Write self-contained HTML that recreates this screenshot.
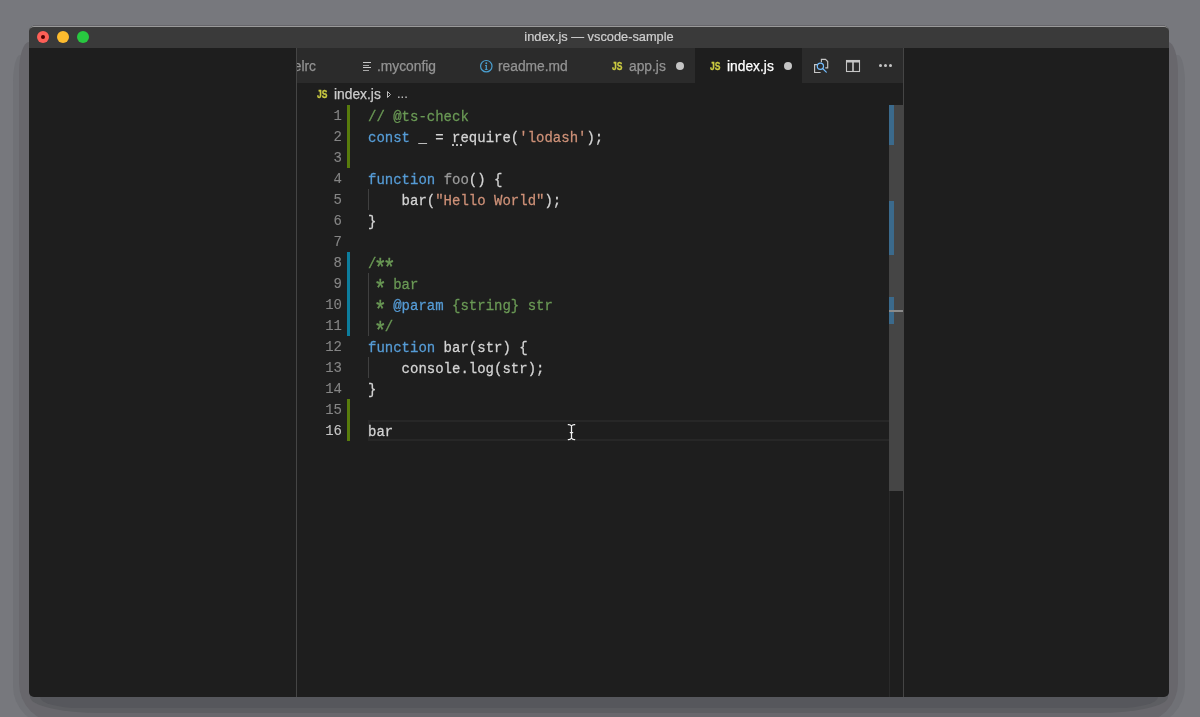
<!DOCTYPE html>
<html><head><meta charset="utf-8">
<style>
*{margin:0;padding:0;box-sizing:border-box}
html,body{width:1200px;height:717px;overflow:hidden;background:#77787d;font-family:"Liberation Sans",sans-serif}
.a{position:absolute}
#shadow1{left:13px;top:55px;width:1172px;height:671px;background:#707176;border-radius:7px 7px 40px 40px/28px 28px 40px 40px}
#shadow2{left:19px;top:42px;width:1159px;height:681px;background:#68676c;border-radius:10px 10px 40px 40px/30px 30px 40px 40px}
#shadow3{left:30px;top:600px;width:1138px;height:113px;background:#5d5e62;border-radius:0 0 70px 70px/0 0 16px 16px}
#shadow4{left:40px;top:600px;width:1118px;height:108px;background:#56575c;border-radius:0 0 40px 40px/0 0 11px 11px}
#win{left:29px;top:26px;width:1140px;height:671px;background:#1e1e1e;border-radius:5px;overflow:hidden}
#title{left:29px;top:26px;width:1140px;height:22px;background:#3a3a3a;border-top:1px solid #9a9a9a;border-radius:5px 5px 0 0}
#title .t{position:absolute;left:0;top:2px;width:1140px;text-align:center;color:#cfcfcf;font-size:12.8px;line-height:16px;-webkit-text-stroke:0.2px currentColor}
.light{position:absolute;top:5px;width:12px;height:12px;border-radius:50%}
.tab{position:absolute;top:49px;height:35px;color:#939393;font-size:13.8px;line-height:35px;white-space:nowrap;-webkit-text-stroke:0.25px currentColor}
.js{position:absolute;color:#cbcb41;font-size:11.5px;line-height:11px;font-weight:bold;font-family:"Liberation Sans",sans-serif;transform:scaleX(0.74);transform-origin:0 0;-webkit-text-stroke:0.3px currentColor}
.dot{position:absolute;width:8px;height:8px;border-radius:50%;background:#c5c5c5}
.code{font-family:"Liberation Mono",monospace;font-size:14px}
.ln{position:absolute;left:297px;width:45px;text-align:right;color:#858585;height:21px;line-height:21px;font-family:"Liberation Mono",monospace;font-size:14px;transform:translateY(1px) scaleY(1.07);-webkit-text-stroke:0.1px currentColor}
.cl{position:absolute;left:368px;height:21px;line-height:21px;color:#d4d4d4;white-space:pre;font-family:"Liberation Mono",monospace;font-size:14px;transform:translateY(1.5px) scaleY(1.07);-webkit-text-stroke:0.25px currentColor}
.ast{display:inline-block;transform:translateY(5.5px) scale(1.5,1.65)}
.k{color:#569cd6}.s{color:#ce9178}.c{color:#6a9955}.dim{color:#9a9a9a}
.gb{position:absolute;left:347px;width:3px}
.ig{position:absolute;width:1px;background:#404040}
</style></head><body><div id="root" style="position:absolute;left:0;top:0;width:1200px;height:717px;will-change:transform">
<div class="a" id="shadow1"></div>
<div class="a" id="shadow2"></div>
<div class="a" id="shadow3"></div>
<div class="a" id="shadow4"></div>
<div class="a" style="left:33px;top:25px;width:1132px;height:1px;background:#67666b"></div>
<div class="a" id="win"></div>
<div class="a" id="title">
  <div class="light" style="left:8px;top:4px;background:#fe5f57"><div style="position:absolute;left:4px;top:4px;width:4px;height:4px;border-radius:50%;background:#4d0000"></div></div>
  <div class="light" style="left:28px;top:4px;background:#febc2e"></div>
  <div class="light" style="left:48px;top:4px;background:#28c840"></div>
  <div class="t">index.js — vscode-sample</div>
</div>
<!-- separators -->
<div class="a" style="left:296px;top:48px;width:1px;height:649px;background:#454545"></div>
<div class="a" style="left:903px;top:48px;width:1px;height:649px;background:#454545"></div>
<!-- tab bar -->
<div class="a" style="left:297px;top:48px;width:606px;height:35px;background:#2b2b2b"></div>
<div class="a" style="left:695px;top:48px;width:107px;height:35px;background:#1e1e1e"></div>
<div class="tab" style="left:297px;width:19px;overflow:hidden"><span style="position:absolute;right:0">.babelrc</span></div>
<!-- myconfig icon -->
<div class="a" style="left:362.5px;top:62px;width:8.5px;height:1.2px;background:#c8c8c8"></div>
<div class="a" style="left:362.5px;top:64.5px;width:6px;height:1.2px;background:#a8a8a8"></div>
<div class="a" style="left:362.5px;top:67px;width:8.5px;height:1.2px;background:#c8c8c8"></div>
<div class="a" style="left:362.5px;top:69.5px;width:6px;height:1.2px;background:#a8a8a8"></div>
<div class="tab" style="left:377px">.myconfig</div>
<!-- info icon -->
<svg class="a" style="left:479px;top:59px" width="15" height="15" viewBox="0 0 15 15"><circle cx="7.3" cy="7.2" r="5.7" fill="none" stroke="#4a9fd0" stroke-width="1.2"/><path d="M6.1 6.1H7.9V10.2H8.7V11H5.9V10.2H6.7V6.9H6.1Z" fill="#4a9fd0"/><circle cx="7.3" cy="4.3" r="0.95" fill="#4a9fd0"/></svg>
<div class="tab" style="left:498px">readme.md</div>
<div class="js" style="left:612px;top:61px">JS</div>
<div class="tab" style="left:629px">app.js</div>
<div class="dot" style="left:676px;top:62px"></div>
<div class="js" style="left:710px;top:61px">JS</div>
<div class="tab" style="left:727px;color:#fff">index.js</div>
<div class="dot" style="left:784px;top:62px"></div>
<!-- actions -->
<svg class="a" style="left:812px;top:57px" width="18" height="18" viewBox="0 0 18 18">
  <path d="M9.4 5.2V2.3H13.5L15.7 4.5V10.8H13.3" fill="none" stroke="#c5c5c5" stroke-width="1.15"/>
  <path d="M5.2 7.6H2.6V15.5H8.6" fill="none" stroke="#c5c5c5" stroke-width="1.15"/>
  <circle cx="8.4" cy="9.25" r="3.1" fill="none" stroke="#75beff" stroke-width="1.2"/>
  <path d="M10.6 11.5L14.3 15.2" stroke="#75beff" stroke-width="1.2" stroke-linecap="round"/>
</svg>
<svg class="a" style="left:845px;top:59px" width="16" height="14" viewBox="0 0 16 14">
  <rect x="1.5" y="1.5" width="13" height="11" fill="none" stroke="#c5c5c5" stroke-width="1.1"/>
  <rect x="1" y="1" width="14" height="2.5" fill="#c5c5c5"/>
  <rect x="7.2" y="1" width="1.6" height="12" fill="#c8c8c8"/>
</svg>
<div class="a" style="left:879px;top:64px;width:3px;height:3px;border-radius:50%;background:#c5c5c5"></div>
<div class="a" style="left:884px;top:64px;width:3px;height:3px;border-radius:50%;background:#c5c5c5"></div>
<div class="a" style="left:889px;top:64px;width:3px;height:3px;border-radius:50%;background:#c5c5c5"></div>
<!-- breadcrumbs -->
<div class="js" style="left:316.5px;top:89px">JS</div>
<div class="a" style="left:334px;top:85.5px;color:#cccccc;font-size:13.8px;line-height:18px;-webkit-text-stroke:0.25px currentColor">index.js</div>
<svg class="a" style="left:386px;top:90px" width="6" height="9" viewBox="0 0 6 9"><path d="M1.5 1.5L4.5 4.5L1.5 7.5Z" fill="none" stroke="#bbbbbb" stroke-width="1"/></svg>
<div class="a" style="left:397px;top:85px;color:#cccccc;font-size:13px;line-height:18px">...</div>
<!-- gutter bars -->
<div class="gb" style="top:105px;height:63px;background:#587c0c"></div>
<div class="gb" style="top:252px;height:84px;background:#0c7d9d"></div>
<div class="gb" style="top:399px;height:42px;background:#587c0c"></div>
<!-- current line -->
<div class="a" style="left:368px;top:420px;width:521px;height:21px;border:2px solid #272727;border-right:none"></div>
<!-- indent guides -->
<div class="ig" style="left:368px;top:189px;height:21px"></div>
<div class="ig" style="left:368px;top:273px;height:63px"></div>
<div class="ig" style="left:368px;top:357px;height:21px"></div>
<!-- line numbers -->
<div class="ln" style="top:105px">1</div>
<div class="ln" style="top:126px">2</div>
<div class="ln" style="top:147px">3</div>
<div class="ln" style="top:168px">4</div>
<div class="ln" style="top:189px">5</div>
<div class="ln" style="top:210px">6</div>
<div class="ln" style="top:231px">7</div>
<div class="ln" style="top:252px">8</div>
<div class="ln" style="top:273px">9</div>
<div class="ln" style="top:294px">10</div>
<div class="ln" style="top:315px">11</div>
<div class="ln" style="top:336px">12</div>
<div class="ln" style="top:357px">13</div>
<div class="ln" style="top:378px">14</div>
<div class="ln" style="top:399px">15</div>
<div class="ln" style="top:420px;color:#c6c6c6">16</div>
<!-- code -->
<div class="cl" style="top:105px"><span class="c">// @ts-check</span></div>
<div class="cl" style="top:126px"><span class="k">const</span> _ = require(<span class="s">'lodash'</span>);</div>
<div class="cl" style="top:168px"><span class="k">function</span> <span class="dim">foo</span>() {</div>
<div class="cl" style="top:189px">    bar(<span class="s">"Hello World"</span>);</div>
<div class="cl" style="top:210px">}</div>
<div class="cl" style="top:252px"><span class="c">/<span class="ast">*</span><span class="ast">*</span></span></div>
<div class="cl" style="top:273px"><span class="c"> <span class="ast">*</span> bar</span></div>
<div class="cl" style="top:294px"><span class="c"> <span class="ast">*</span> </span><span class="k">@param</span><span class="c"> {string} str</span></div>
<div class="cl" style="top:315px"><span class="c"> <span class="ast">*</span>/</span></div>
<div class="cl" style="top:336px"><span class="k">function</span> bar(str) {</div>
<div class="cl" style="top:357px">    console.log(str);</div>
<div class="cl" style="top:378px">}</div>
<div class="cl" style="top:420px">bar</div>
<!-- suggestion dots -->
<div class="a" style="left:452px;top:144px;width:2px;height:2px;background:#b8b8b8"></div>
<div class="a" style="left:456px;top:144px;width:2px;height:2px;background:#b8b8b8"></div>
<div class="a" style="left:460px;top:144px;width:2px;height:2px;background:#b8b8b8"></div>
<!-- scrollbar -->
<div class="a" style="left:889px;top:105px;width:14px;height:592px;border-left:1px solid #2a2a2a"></div>
<div class="a" style="left:889px;top:105px;width:14px;height:386px;background:#454545"></div>
<div class="a" style="left:889px;top:105px;width:5px;height:40px;background:#3b6a8c"></div>
<div class="a" style="left:889px;top:201px;width:5px;height:54px;background:#3b6a8c"></div>
<div class="a" style="left:889px;top:297px;width:5px;height:27px;background:#3b6a8c"></div>
<div class="a" style="left:889px;top:310px;width:14px;height:2px;background:#8a8a8a"></div>
<!-- I-beam cursor -->
<svg class="a" style="left:566px;top:422px" width="12" height="20" viewBox="0 0 12 20"><path d="M2.3 2.6Q4.4 2.4 5.5 4M8.7 2.6Q6.6 2.4 5.5 4M5.5 4V16M2.3 17.6Q4.4 17.8 5.5 16M8.7 17.6Q6.6 17.8 5.5 16M4.3 10.5H6.7" fill="none" stroke="#f2f2f2" stroke-width="1.25" stroke-linecap="round"/></svg>
</div></body></html>
